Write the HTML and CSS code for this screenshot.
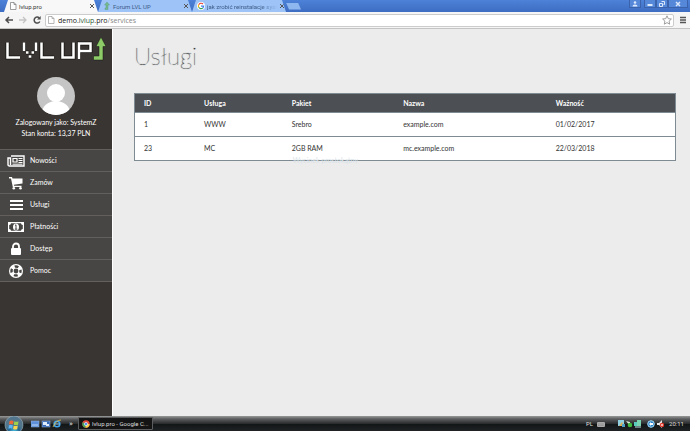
FILE: index.html
```html
<!DOCTYPE html>
<html lang="pl">
<head>
<meta charset="utf-8">
<title>lvlup.pro</title>
<link rel="stylesheet" href="styles.css">
</head>
<body>
<div class="screen">
  <header class="tabs">
    <div class="tab active">
      <svg class="fav" viewBox="0 0 8 8"><path d="M1.500 .5h3.500l2 2v5h-5.500z M5 .5v2h2" fill="#fff" stroke="#777" stroke-width=".7"/></svg>
      <span class="tab-name">lvlup.pro</span>
      <button class="close" aria-label="Zamknij kartę"><svg viewBox="0 0 6 6"><path d="M1 1l4 4M5 1L1 5"/></svg></button>
    </div>
    <div class="tab">
      <svg class="fav" viewBox="0 0 8 8"><path d="M4 0l2.500 3H5v4.500H2V6h1V3H1.500z" fill="#75b98c" stroke="#55977e" stroke-width=".4"/></svg>
      <span class="tab-name">Forum LVL UP</span>
      <button class="close" aria-label="Zamknij kartę"><svg viewBox="0 0 6 6"><path d="M1 1l4 4M5 1L1 5"/></svg></button>
    </div>
    <div class="tab">
      <svg class="fav" viewBox="0 0 8 8"><circle cx="4" cy="4" r="4" fill="#fff"/><g fill="none" stroke-width="1.100"><path d="M6 2A2.700 2.700 0 0 0 1.700 2.700" stroke="#e54335"/><path d="M1.700 2.700a2.700 2.700 0 0 0 0 2.600" stroke="#f6b704"/><path d="M1.700 5.300A2.700 2.700 0 0 0 5.800 6" stroke="#34a353"/><path d="M5.800 6A2.600 2.600 0 0 0 6.700 4.100H4" stroke="#4280ef"/></g></svg>
      <span class="tab-name fade">jak zrobić reinstalacje syst</span>
      <button class="close" aria-label="Zamknij kartę"><svg viewBox="0 0 6 6"><path d="M1 1l4 4M5 1L1 5"/></svg></button>
    </div>
    <button class="newtab" aria-label="Nowa karta"></button>
    <div class="window-buttons">
      <button class="user" aria-label="Użytkownik"><svg viewBox="0 0 10 8"><circle cx="5" cy="2.500" r="1.300"/><path d="M2.500 6.500q0-2 2.500-2t2.500 2z"/></svg></button>
      <button aria-label="Minimalizuj"><svg viewBox="0 0 10 8"><path d="M2.500 4h5v2h-5z"/></svg></button>
      <button aria-label="Przywróć"><svg viewBox="0 0 10 8"><path d="M4.500 1.500h3v3h-1M2.500 3.500h3v3h-3z" fill="none" stroke="#dbe8fc"/></svg></button>
      <button class="quit" aria-label="Zamknij"><svg viewBox="0 0 10 8"><path d="M3 2l4 4M7 2L3 6" stroke="#dbe8fc" stroke-width="1.500"/></svg></button>
    </div>
  </header>
  <div class="toolbar">
    <button aria-label="Wstecz"><svg viewBox="0 0 10 10"><path d="M9 5H2M5 2L2 5l3 3" fill="none" stroke="#4d4d4d" stroke-width="1.500"/></svg></button>
    <button aria-label="Dalej"><svg viewBox="0 0 10 10"><path d="M1 5h7M5 2l3 3-3 3" fill="none" stroke="#c4c4c4" stroke-width="1.300"/></svg></button>
    <button aria-label="Odśwież"><svg viewBox="0 0 10 10"><path d="M7.800 6.500A3 3 0 1 1 7.200 2.800" fill="none" stroke="#4d4d4d" stroke-width="1.500"/><path d="M8.700 1v3.600H5z" fill="#4d4d4d"/></svg></button>
    <div class="address">
      <svg class="fav" viewBox="0 0 8 8"><path d="M1.500 .5h3.500l2 2v5h-5.500z M5 .5v2h2" fill="#fff" stroke="#999" stroke-width=".7"/></svg>
      <a class="url" href="#"><b>demo.<i>lvlup</i>.pro</b>/services</a>
      <svg class="star" viewBox="0 0 10 10"><path d="M5 .8l1.300 2.900 3.100.3-2.300 2.100.6 3.100L5 7.600 2.300 9.200l.6-3.100L.6 4l3.100-.3z" fill="#fff" stroke="#888" stroke-width=".8"/></svg>
    </div>
    <button class="menu" aria-label="Menu"><svg viewBox="0 0 10 10"><path d="M2 2.500h6M2 5h6M2 7.500h6" stroke="#555" stroke-width="1.600"/></svg></button>
  </div>

  <div class="page">
    <aside class="sidebar">
      <svg class="logo" viewBox="0 0 112 30" role="img" aria-label="LVL UP">
        <defs>
          <g id="letters">
            <polyline points="7.500,8.500 7.500,23.500 20,23.500"/>
            <polyline points="24,8.500 24,17"/><polyline points="36,8.500 36,17"/>
            <polyline points="26,18.500 28.500,18.500"/><polyline points="31.500,18.500 34,18.500"/><polyline points="28.700,22.500 31.300,22.500"/>
            <polyline points="41.500,8.500 41.500,23.500 54,23.500"/>
            <polyline points="62.500,8.500 62.500,23.500 73.500,23.500 73.500,8.500"/>
            <polyline points="79,25 79,9.500 90.500,9.500 90.500,17 79,17"/>
          </g>
        </defs>
        <use href="#letters" class="outline"/>
        <use href="#letters" class="letters"/>
        <path d="M101 3l5 9.500h-3v13.500h-9.500v-4h5.500v-9.500h-3z" fill="#8ccb68" stroke="#161513" stroke-width=".5"/>
      </svg>
      <svg class="avatar" viewBox="0 0 38 38"><defs><clipPath id="round"><circle cx="19" cy="19" r="19"/></clipPath></defs><g clip-path="url(#round)"><path d="M0 0h38v38H0z" fill="#c5c5c5"/><circle cx="19" cy="16" r="9" fill="#fff"/><ellipse cx="19" cy="36" rx="14" ry="12" fill="#fff"/></g></svg>
      <p class="account">Zalogowany jako: SystemZ<br>Stan konta: 13,37 PLN</p>
      <nav>
        <a href="#"><svg viewBox="0 0 18 14"><path d="M4 2h13v10H2.500Q1 12 1 10.500V4h2.500v7" fill="none" stroke="#fff" stroke-width="1.400"/><path d="M6 4.500h4v3.500H6z" fill="none" stroke="#fff" stroke-width="1.200"/><path d="M11.500 4.500h4M11.500 6.500h4M11.500 8.500h4M5.500 10.200h10" stroke="#fff"/></svg>Nowości</a>
        <a href="#"><svg viewBox="0 0 18 14"><path d="M2 1h3l.5 1.500H15.500v5L6.800 8.800l.3 1H14.500v1.200H5.800L4 2.400H2z" fill="#fff"/><circle cx="6.800" cy="12.300" r="1.300" fill="#fff"/><circle cx="13.500" cy="12.300" r="1.300" fill="#fff"/></svg>Zamów</a>
        <a href="#"><svg viewBox="0 0 18 14"><path d="M3 3h13M3 7h13M3 11h13" stroke="#fff" stroke-width="2"/></svg>Usługi</a>
        <a href="#"><svg viewBox="0 0 18 14"><path d="M1 2h16v10H1z" fill="#fff"/><path d="M4 3.200h10a1.800 1.800 0 0 0 1.800 1.800v4A1.800 1.800 0 0 0 14 10.800H4A1.800 1.800 0 0 0 2.200 9V5A1.800 1.800 0 0 0 4 3.200z" fill="#484644"/><ellipse cx="9" cy="7" rx="3" ry="3.600" fill="#fff"/><path d="M8 5.500l1-.7V9M7.800 9.200h2.500" fill="none" stroke="#484644"/></svg>Płatności</a>
        <a href="#"><svg viewBox="0 0 18 14"><path d="M6 6V4.500a3 3 0 0 1 6 0V6" fill="none" stroke="#fff" stroke-width="1.800"/><rect x="4" y="6" width="10" height="7" rx="1" fill="#fff"/></svg>Dostęp</a>
        <a href="#"><svg viewBox="0 0 18 14"><circle cx="9" cy="7" r="7" fill="#fff"/><circle cx="9" cy="7" r="4.500" fill="none" stroke="#484644" stroke-width="2.400" stroke-dasharray="3.800 3.268" stroke-dashoffset="1.900"/><circle cx="9" cy="7" r="2.400" fill="#484644"/></svg>Pomoc</a>
      </nav>
    </aside>
    <main>
      <h1>Usługi</h1>
      <div class="services">
        <table>
          <colgroup><col class="c-id"><col class="c-service"><col class="c-plan"><col class="c-name"><col></colgroup>
          <thead><tr><th>ID</th><th>Usługa</th><th>Pakiet</th><th>Nazwa</th><th>Ważność</th></tr></thead>
          <tbody>
            <tr><td>1</td><td>WWW</td><td>Srebro</td><td>example.com</td><td>01/02/2017</td></tr>
            <tr><td>23</td><td>MC</td><td>2GB RAM</td><td>mc.example.com</td><td>22/03/2018</td></tr>
          </tbody>
        </table>
        <span class="snip">Wycinek prostokątny</span>
      </div>
    </main>
  </div>

  <footer class="taskbar">
    <button class="start" aria-label="Start"><svg viewBox="0 0 20 16"><defs><radialGradient id="orb" cy=".9"><stop offset="0" stop-color="#4bd0ee"/><stop offset=".6" stop-color="#23648f"/><stop offset="1" stop-color="#52758c"/></radialGradient></defs><circle cx="10" cy="9" r="9" fill="url(#orb)" stroke="#9cb4c0" stroke-width=".6"/><path d="M5.500 5q2-1.200 4 0L9 8.500q-2-1-4 0z" fill="#ee6a35"/><path d="M10.300 5.300q2 1 4.200 0L14 8.800q-2 1-4.200 0z" fill="#9ed04b"/><path d="M4.900 9.300q2-1 4 0l-.5 3.500q-2-1-4 0z" fill="#5db5f4"/><path d="M9.600 9.500q2 1 4.200 0l-.5 3.500q-2 1-4.200 0z" fill="#fbd44c"/></svg></button>
    <svg class="quick" viewBox="0 0 30 10"><rect x="0" y="2" width="8" height="6" fill="#5d90d8" stroke="#9bbce8" stroke-width=".5"/><path d="M1 6h6" stroke="#c4dcfa"/><rect x="11" y="2" width="8" height="6" fill="#3768b4" stroke="#9bbce8" stroke-width=".5"/><path d="M12 3h4v3h-4zM15 5h3v2h-3z" fill="#deebfb"/><circle cx="26" cy="5" r="2.800" fill="none" stroke="#43a7ee" stroke-width="1.600"/><path d="M24 5h4.500" stroke="#9ad4ff"/><path d="M22 8Q25 1 30 1" fill="none" stroke="#ecc94b" stroke-width=".8"/></svg>
    <span class="more">»</span>
    <button class="task"><svg viewBox="0 0 8 8"><circle cx="4" cy="4" r="3.700" fill="#e34a3b"/><path d="M4 4L.8 2.200A3.700 3.700 0 0 0 3.500 7.700z" fill="#44a85a"/><path d="M4 4h3.700a3.700 3.700 0 0 1-4.200 3.700z" fill="#f6cf45"/><circle cx="4" cy="4" r="1.600" fill="#4c8ae8" stroke="#fff" stroke-width=".6"/></svg>lvlup.pro - Google C...</button>
    <div class="tray">
      <span>PL</span>
      <svg class="keyboard" viewBox="0 0 8 6"><rect y="1" width="8" height="5" rx="1" fill="#aaa"/><path d="M1 3h6M1 4.500h6" stroke="#777" stroke-width=".5" stroke-dasharray="1 .4"/></svg>
      <svg class="tray-icons" viewBox="0 0 48 10"><rect x="1" y="1" width="6" height="6" fill="#8fcfe0"/><path d="M2 7l3-4 2 4z" fill="#ddae55"/><path d="M5 5h3v3H5z" fill="#4ea0c6"/><path d="M9 2l4 1v4z" fill="#dcebd9"/><circle cx="13" cy="6" r="2.300" fill="#41b93e"/><rect x="17" y="3" width="5" height="4" fill="#58cbbd"/><rect x="20" y="1" width="4" height="6" fill="#7ad4b0"/><path d="M18 8h6" stroke="#c4e9ee"/><circle cx="34" cy="5" r="3.300" fill="#2b7fc4" stroke="#a9def6"/><path d="M32 5l2-2v1h2v2h-2v1z" fill="#fff"/><path d="M40 4h2l3-3v8l-3-3h-2z" fill="#e5e5e5"/><circle cx="45" cy="6" r="2.200" fill="#e2392d"/><path d="M44 5l2 2M46 5l-2 2" stroke="#fff" stroke-width=".6"/></svg>
      <time>20:11</time>
    </div>
  </footer>
</div>
</body>
</html>
```
FILE: styles.css
```css
* { box-sizing: border-box; }
body { margin: 0; font: 7px/11px Lato, "Liberation Sans", sans-serif; color: #333; }
button { display: flex; align-items: center; justify-content: center; padding: 0; border: 0; background: none; color: inherit; font: inherit; }
a { color: inherit; text-decoration: none; }
svg { display: block; flex: none; }
.screen { display: flex; flex-direction: column; min-height: 100vh; }

.tabs { display: flex; align-items: flex-end; height: 12px; padding-left: 4px; background: linear-gradient(#4d82d8, #3d6dc2); font: 6px/11px Roboto, "Liberation Sans", sans-serif; }
.tab { display: flex; align-items: center; gap: 2px; width: 94px; height: 12px; padding: 0 3px 0 5px; background: #9dc3f7; color: #3d5a85; clip-path: polygon(0 100%, 4px 0, calc(100% - 4px) 0, 100% 100%); }
.tab.active { background: #f8f8f8; color: #333; }
.fav { width: 8px; height: 8px; }
.tab-name { flex: 1; white-space: nowrap; }
.fade { mask-image: linear-gradient(to right, #000 75%, transparent); }
.close svg { width: 6px; height: 6px; fill: none; stroke: #555; }
.newtab { align-self: center; width: 15px; height: 7px; background: #8eb7f0; clip-path: polygon(0 0, 80% 0, 100% 100%, 20% 100%); }
.window-buttons { display: flex; align-self: flex-start; margin-left: auto; padding-right: 2px; }
.window-buttons button { width: 12px; height: 8px; border: 1px solid #3a63ac; border-top: 0; background: #5688da; }
.window-buttons svg { width: 10px; height: 8px; fill: #dbe8fc; }
.window-buttons .user { margin-right: 3px; }
.window-buttons .quit { width: 20px; }

.toolbar { display: flex; align-items: center; gap: 3px; height: 17px; padding: 0 2px 0 3px; border-bottom: 1px solid #c4c4c4; background: #f5f5f5; }
.toolbar button { width: 11px; }
.toolbar button svg, .star { width: 10px; height: 10px; }
.address { display: flex; flex: 1; align-items: center; gap: 3px; height: 13px; padding: 0 1px; border: 1px solid #ccc; border-radius: 2px; background: #fff; font: 7px/11px "Open Sans", "Liberation Sans", sans-serif; color: #888; }
.url { flex: 1; }
.url b { font-weight: 400; color: #222; }
.url i { font-style: normal; color: #2f5a35; }

.page { display: flex; flex: 1; }
.sidebar { width: 113px; padding-top: 5px; border-right: 1px solid #fff; background: #393532; color: #fff; text-align: center; }
.logo { width: 112px; height: 30px; }
.letters { fill: none; stroke: #fff; stroke-width: 2.5; }
.outline { fill: none; stroke: #161513; stroke-width: 4; }
.avatar { width: 38px; height: 38px; margin: 13px auto 2px; }
.account { margin: 0 0 10px; }
nav { border-bottom: 1px solid #625f5d; }
nav a { display: flex; align-items: center; gap: 5px; height: 22px; padding-left: 7px; border-top: 1px solid #625f5d; background: #484644; }
nav svg { width: 18px; height: 14px; }

main { flex: 1; padding: 11px 14px 11px 21px; background: #ececec; }
h1 { margin: 0 0 21px; font-size: 24px; line-height: 32px; font-weight: 100; color: #222629; text-shadow: 0 0 1px #222629; }
.services { position: relative; }
.snip { position: absolute; right: 318px; bottom: -5px; color: #d9e2e8; }
table { width: 100%; border: 1px solid #7f8b92; border-collapse: collapse; table-layout: fixed; background: #fff; }
thead { background: #4c4f54; color: #fff; }
th, td { padding: 0 9px; text-align: left; }
th { height: 19px; font-weight: 700; }
td { height: 24px; border-top: 1px solid #7f8b92; }
.c-id { width: 11.2%; }
.c-service { width: 16.2%; }
.c-plan { width: 20.6%; }
.c-name { width: 28.2%; }

.taskbar { display: flex; align-items: center; height: 15px; padding: 0 6px 0 4px; background: linear-gradient(#999, #5b5d5e 20%, #2b2d2e 50%, #131617 55%, #202325); font: 6px/11px Roboto, "Liberation Sans", sans-serif; color: #ddd; }
.start svg { width: 20px; height: 16px; }
.quick { width: 30px; height: 10px; margin-left: 7px; }
.more { width: 9px; margin-left: 8px; font-size: 8px; }
.task { justify-content: flex-start; gap: 2px; width: 75px; height: 13px; padding-left: 3px; border: 1px solid #5b5d5e; border-radius: 1px; background: #141414; white-space: nowrap; }
.task svg { width: 8px; height: 8px; }
.tray { display: flex; align-items: center; gap: 4px; margin-left: auto; }
.keyboard { width: 8px; height: 6px; }
.tray-icons { width: 48px; height: 10px; margin-left: 8px; }
```
